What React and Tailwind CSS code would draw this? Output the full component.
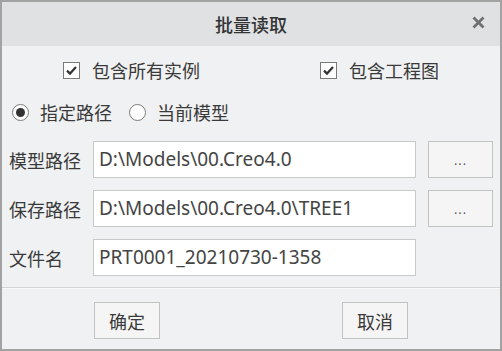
import React from "react";

const cjk = "font-['Noto_Sans_CJK_SC','Noto_Sans',sans-serif]";

function CheckBox({ label }) {
  return (
    <div className="flex items-center">
      <span className="w-[17px] h-[17px] border border-[#7a7a7a] bg-white flex items-center justify-center">
        <svg width="13" height="13" viewBox="0 0 13 13">
          <path d="M2 6.6 L5 9.6 L11 3" fill="none" stroke="#333" strokeWidth="2.2" />
        </svg>
      </span>
      <span className="ml-[12px]">{label}</span>
    </div>
  );
}

function Radio({ label, checked }) {
  return (
    <div className="flex items-center">
      <span className="w-[17px] h-[17px] rounded-full border border-[#7a7a7a] bg-white flex items-center justify-center">
        {checked && <span className="w-[9px] h-[9px] rounded-full bg-[#333]" />}
      </span>
      <span className="ml-[11px]">{label}</span>
    </div>
  );
}

function PathRow({ label, value, browse }) {
  return (
    <div className="flex items-center h-[37px]">
      <span className="w-[91px] pl-[7px] whitespace-nowrap">{label}</span>
      <div className="w-[323px] h-[37px] border border-[#c9c9c9] bg-white flex items-center pl-[5px] text-[19px] text-[#444] font-['Noto_Sans',sans-serif]">
        {value}
      </div>
      {browse && (
        <div className="ml-[12px] w-[65px] h-[37px] border border-[#c2c2c2] bg-[#f5f5f5] flex items-center justify-center text-[12px] text-[#555] tracking-[1px]">
          ...
        </div>
      )}
    </div>
  );
}

export default function App() {
  return (
    <div className={`w-[502px] h-[351px] border-2 border-[#a2a2a2] bg-[#f0f1f2] text-[18px] leading-none text-[#3a3a3a] flex flex-col ${cjk}`}>
      <div className="h-[44px] shrink-0 bg-[#dfe1e3] flex items-center relative">
        <span className="w-full text-center font-medium text-[#333]">批量读取</span>
        <span className="absolute right-[15px] top-[14px]">
          <svg width="13" height="13" viewBox="0 0 13 13">
            <path d="M1.5 1.5 L11.5 11.5 M11.5 1.5 L1.5 11.5" stroke="#707070" strokeWidth="2.8" />
          </svg>
        </span>
      </div>

      <div className="flex items-center h-[24px] mt-[12px] pl-[61px]">
        <div className="w-[257px]">
          <CheckBox label="包含所有实例" />
        </div>
        <CheckBox label="包含工程图" />
      </div>

      <div className="flex items-center h-[24px] mt-[18px] pl-[10px] gap-[17px]">
        <Radio label="指定路径" checked />
        <Radio label="当前模型" />
      </div>

      <div className="flex flex-col gap-[12px] mt-[17px]">
        <PathRow label="模型路径" value="D:\Models\00.Creo4.0" browse />
        <PathRow label="保存路径" value="D:\Models\00.Creo4.0\TREE1" browse />
        <PathRow label="文件名" value="PRT0001_20210730-1358" />
      </div>

      <div className="mt-[11px] border-t border-[#d2d3d5] shadow-[0_1px_0_#fafafa]" />

      <div className="flex items-center mt-[14px] pl-[92px]">
        <div className="w-[66px] h-[37px] border border-[#c2c2c2] bg-[#f5f5f5] flex items-center justify-center">确定</div>
        <div className="ml-[182px] w-[66px] h-[37px] border border-[#c2c2c2] bg-[#f5f5f5] flex items-center justify-center">取消</div>
      </div>
    </div>
  );
}
